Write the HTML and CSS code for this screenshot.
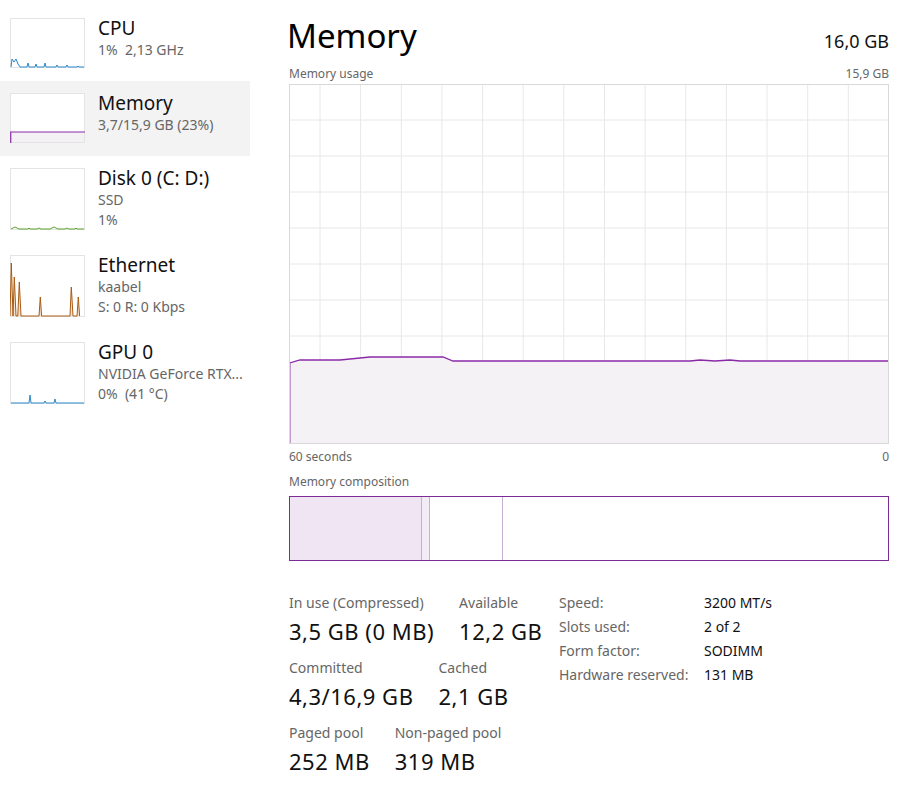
FILE: index.html
```html
<!DOCTYPE html>
<html lang="en">
<head>
<meta charset="utf-8">
<title>Task Manager - Memory</title>
<link rel="stylesheet" href="styles.css">
</head>
<body>
<div class="app">
  <aside class="sidebar">
    <div class="item">
      <svg class="thumb thumb-2" viewBox="0 0 75 50">
        <rect x="0.5" y="0.5" width="74" height="49" class="tb"/>
        <polyline class="cpu" points="1,49 2,41 4,44 6,41 8,46 10,49 17,49 18,45 19,49 25,49 26,46 27,49 34,49 35,45 36,49 46,49 47,47 48,49 56,49 57,47 58,49 67,49 68,48 69,49 74,49"/>
      </svg>
      <div class="text">
        <div class="title">CPU</div>
        <div class="sub">1%&nbsp; 2,13 GHz</div>
      </div>
    </div>
    <div class="item selected">
      <svg class="thumb thumb-2" viewBox="0 0 75 50">
        <rect x="0.5" y="0.5" width="74" height="49" class="tb"/>
        <rect x="1" y="39" width="73" height="10" class="memfill"/>
        <polyline class="mem" points="0.75,50 0.75,39 75,39"/>
      </svg>
      <div class="text">
        <div class="title">Memory</div>
        <div class="sub">3,7/15,9 GB (23%)</div>
      </div>
    </div>
    <div class="item">
      <svg class="thumb thumb-3" viewBox="0 0 75 62">
        <rect x="0.5" y="0.5" width="74" height="61" class="tb"/>
        <polyline class="disk" points="1,61 3,60 5,59 7,60 9,61 18,61 19,60 20,61 27,61 29,60 31,61 40,61 42,60 44,59 46,60 48,61 55,61 57,60 59,61 65,61 66,60 67,61 74,61"/>
      </svg>
      <div class="text">
        <div class="title">Disk 0 (C: D:)</div>
        <div class="sub">SSD</div>
        <div class="sub">1%</div>
      </div>
    </div>
    <div class="item">
      <svg class="thumb thumb-3" viewBox="0 0 75 62">
        <rect x="0.5" y="0.5" width="74" height="61" class="tb"/>
        <polygon class="ethfill" points="0,61 1.3,8 3,61 4.3,22 6,61 7.8,61 9.3,27 11,61 29,61 30.3,42 31.6,61 60,61 61.3,32 63,61 67,61 68.3,42 69.6,61"/>
        <polyline class="eth" points="0,61 1.3,8 3,61 4.3,22 6,61 7.8,61 9.3,27 11,61 29,61 30.3,42 31.6,61 60,61 61.3,32 63,61 67,61 68.3,42 69.6,61"/>
      </svg>
      <div class="text">
        <div class="title">Ethernet</div>
        <div class="sub">kaabel</div>
        <div class="sub">S: 0 R: 0 Kbps</div>
      </div>
    </div>
    <div class="item">
      <svg class="thumb thumb-3" viewBox="0 0 75 62">
        <rect x="0.5" y="0.5" width="74" height="61" class="tb"/>
        <polyline class="gpu" points="1,61 19,61 20,53 21,61 34,61 35,59 36,61 44,61 45,57 46,61 74,61"/>
      </svg>
      <div class="text">
        <div class="title">GPU 0</div>
        <div class="sub">NVIDIA GeForce RTX...</div>
        <div class="sub">0%&nbsp; (41 °C)</div>
      </div>
    </div>
  </aside>

  <main class="main">
    <div class="header">
      <h1 class="h-title">Memory</h1>
      <div class="h-total">16,0 GB</div>
    </div>
    <div class="caption-row">
      <span>Memory usage</span>
      <span>15,9 GB</span>
    </div>
    <svg class="graph" viewBox="0 0 600 360">
      <g class="grid">
        <line x1="31" y1="0" x2="31" y2="360"/>
        <line x1="71.6" y1="0" x2="71.6" y2="360"/>
        <line x1="112.3" y1="0" x2="112.3" y2="360"/>
        <line x1="152.9" y1="0" x2="152.9" y2="360"/>
        <line x1="193.6" y1="0" x2="193.6" y2="360"/>
        <line x1="234.2" y1="0" x2="234.2" y2="360"/>
        <line x1="274.8" y1="0" x2="274.8" y2="360"/>
        <line x1="315.5" y1="0" x2="315.5" y2="360"/>
        <line x1="356.1" y1="0" x2="356.1" y2="360"/>
        <line x1="396.8" y1="0" x2="396.8" y2="360"/>
        <line x1="437.4" y1="0" x2="437.4" y2="360"/>
        <line x1="478" y1="0" x2="478" y2="360"/>
        <line x1="518.7" y1="0" x2="518.7" y2="360"/>
        <line x1="559.3" y1="0" x2="559.3" y2="360"/>
        <line x1="0" y1="36" x2="600" y2="36"/>
        <line x1="0" y1="72" x2="600" y2="72"/>
        <line x1="0" y1="108" x2="600" y2="108"/>
        <line x1="0" y1="144" x2="600" y2="144"/>
        <line x1="0" y1="180" x2="600" y2="180"/>
        <line x1="0" y1="216" x2="600" y2="216"/>
        <line x1="0" y1="252" x2="600" y2="252"/>
        <line x1="0" y1="288" x2="600" y2="288"/>
        <line x1="0" y1="324" x2="600" y2="324"/>
      </g>
      <polygon class="area" points="0,360 0,279 11,276 51,276 81,273 154,273 164,277 401,277 411,276 426,277 441,276 451,277 600,277 600,360"/>
      <polyline class="usage" points="0.8,360 0.8,279 11,276 51,276 81,273 154,273 164,277 401,277 411,276 426,277 441,276 451,277 600,277"/>
      <rect class="frame" x="0.5" y="0.5" width="599" height="359"/>
    </svg>
    <div class="caption-row axis">
      <span>60 seconds</span>
      <span>0</span>
    </div>
    <div class="caption-row comp-label">
      <span>Memory composition</span>
    </div>
    <div class="composition">
      <div class="seg seg-inuse"></div>
      <div class="seg seg-modified"></div>
      <div class="seg seg-standby"></div>
      <div class="seg seg-free"></div>
    </div>

    <div class="stats">
      <div class="stats-left">
        <div class="stat-row">
          <div class="stat">
            <div class="label">In use (Compressed)</div>
            <div class="value">3,5 GB (0 MB)</div>
          </div>
          <div class="stat">
            <div class="label">Available</div>
            <div class="value">12,2 GB</div>
          </div>
        </div>
        <div class="stat-row">
          <div class="stat">
            <div class="label">Committed</div>
            <div class="value">4,3/16,9 GB</div>
          </div>
          <div class="stat">
            <div class="label">Cached</div>
            <div class="value">2,1 GB</div>
          </div>
        </div>
        <div class="stat-row">
          <div class="stat">
            <div class="label">Paged pool</div>
            <div class="value">252 MB</div>
          </div>
          <div class="stat">
            <div class="label">Non-paged pool</div>
            <div class="value">319 MB</div>
          </div>
        </div>
      </div>
      <dl class="props">
        <dt>Speed:</dt><dd>3200 MT/s</dd>
        <dt>Slots used:</dt><dd>2 of 2</dd>
        <dt>Form factor:</dt><dd>SODIMM</dd>
        <dt>Hardware reserved:</dt><dd>131 MB</dd>
      </dl>
    </div>
  </main>
</div>
</body>
</html>
```
FILE: styles.css
```css
* { box-sizing: border-box; }
html, body {
  margin: 0;
  padding: 0;
  background: #ffffff;
}
body {
  font-family: "Noto Sans", "Open Sans", sans-serif;
  color: #1a1a1a;
  width: 904px;
  height: 788px;
  overflow: hidden;
}
.app {
  display: flex;
  align-items: flex-start;
}

/* Sidebar */
.sidebar {
  width: 250px;
  padding-top: 6px;
  display: flex;
  flex-direction: column;
}
.item {
  display: flex;
  align-items: flex-start;
  gap: 13px;
  padding: 12px 0 13px 10px;
}
.item.selected {
  background: #f3f3f3;
}
.thumb {
  display: block;
  width: 75px;
  flex: none;
  background: #ffffff;
}
.thumb-2 { height: 50px; }
.thumb-3 { height: 62px; }
.tb { fill: #ffffff; stroke: #e4e4e4; stroke-width: 1; }
.cpu { fill: none; stroke: #2b88c8; stroke-width: 1; }
.gpu { fill: none; stroke: #2b88c8; stroke-width: 1; }
.disk { fill: none; stroke: #5aa12e; stroke-width: 1; }
.eth { fill: none; stroke: #a95a12; stroke-width: 1; }
.ethfill { fill: #f6e3d2; }
.mem { fill: none; stroke: #8b2aa6; stroke-width: 1.2; }
.memfill { fill: #f3f1f4; }

.text {
  margin-top: -2px;
  white-space: nowrap;
}
.title {
  font-size: 19px;
  line-height: 24px;
  color: #111111;
}
.sub {
  font-size: 14px;
  line-height: 20px;
  color: #666666;
}

/* Main */
.main {
  width: 600px;
  margin-left: 39px;
  padding-top: 16px;
}
.header {
  display: flex;
  justify-content: space-between;
  align-items: baseline;
}
.h-title {
  margin: 0 0 0 -2px;
  font-weight: 400;
  font-size: 33px;
  line-height: 40px;
  color: #000000;
}
.h-total {
  font-size: 18px;
  line-height: 24px;
  color: #111111;
}
.caption-row {
  display: flex;
  justify-content: space-between;
  font-size: 12px;
  line-height: 16px;
  color: #666666;
  margin-top: 10px;
  margin-bottom: 2px;
}
.caption-row.axis {
  margin-top: 5px;
  margin-bottom: 0;
}
.caption-row.comp-label {
  margin-top: 9px;
  margin-bottom: 6px;
}
.graph {
  display: block;
  width: 600px;
  height: 360px;
}
.grid line { stroke: #e8e8e8; stroke-width: 1; }
.area { fill: #f4f2f5; }
.usage { fill: none; stroke: #8b2aa6; stroke-width: 1.3; }
.frame { fill: none; stroke: #d9d9d9; stroke-width: 1; }

.composition {
  display: flex;
  height: 65px;
  border: 1.5px solid #7e2c95;
}
.seg { height: 100%; }
.seg-inuse { width: 132px; background: #efe5f3; border-right: 1px solid #c9afd3; }
.seg-modified { width: 8px; background: #f3ebf6; border-right: 1px solid #c9afd3; }
.seg-standby { width: 73px; background: #ffffff; border-right: 1px solid #c9afd3; }
.seg-free { flex: 1; background: #ffffff; }

/* Stats */
.stats {
  display: flex;
  align-items: flex-start;
  margin-top: 32px;
}
.stats-left {
  width: 270px;
  flex: none;
  display: flex;
  flex-direction: column;
  gap: 12px;
}
.stat-row {
  display: flex;
  gap: 25px;
}
.stat { white-space: nowrap; }
.label {
  font-size: 14px;
  line-height: 20px;
  color: #666666;
}
.value {
  margin-top: 3px;
  font-size: 22px;
  line-height: 30px;
  letter-spacing: 0.5px;
  color: #111111;
}
.props {
  margin: -2px 0 0 0;
  display: grid;
  grid-template-columns: 145px auto;
  align-content: start;
  font-size: 14px;
  line-height: 24px;
}
.props dt { color: #666666; margin: 0; }
.props dd { color: #111111; margin: 0; }
```
